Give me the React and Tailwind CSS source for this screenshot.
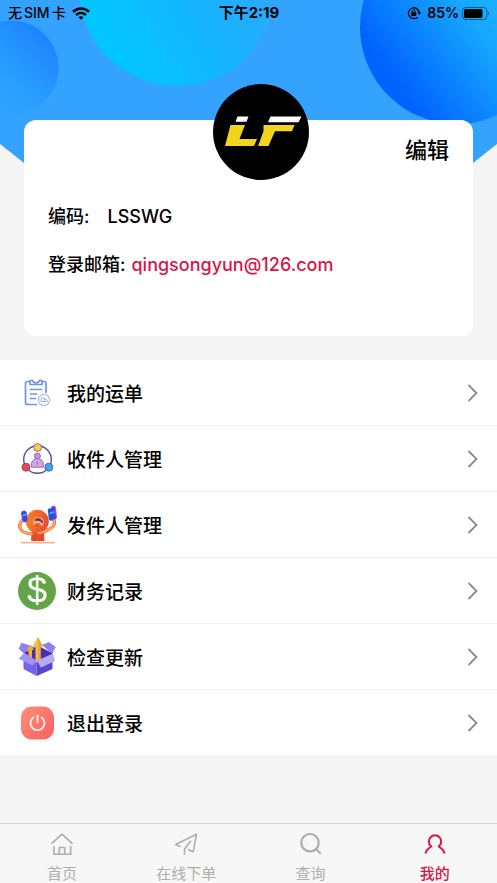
import React from "react";

const WaybillIcon = () => (
  <svg viewBox="0 0 38 38" className="size-full" fill="none" stroke="#6f93ea" strokeWidth="1.700" strokeLinecap="round" strokeLinejoin="round">
    <path d="M11.500 7.500H9.500A2 2 0 0 0 7.500 9.500V28.500A2 2 0 0 0 9.500 30.500H18.500M24.500 7.500H26A2 2 0 0 1 28 9.500V18.500" />
    <path d="M12 6.500h2.500c1 3 6 3 7 0H24v4H12z" />
    <path d="M12.500 15.500h11M12.500 20h6M12.500 24.500h5" />
    <circle cx="26" cy="26" r="5.600" stroke="#a9bff5" strokeWidth="1.300" />
    <path d="M23 27.500v-3.500h3.500v3.500M26.500 25.200h1.800l1 1.200v1.200h-5.800" stroke="#8fabf0" strokeWidth="0.900" />
  </svg>
);

const ReceiverIcon = () => (
  <svg viewBox="0 0 38 38" className="size-full">
    <circle cx="19.500" cy="19.500" r="13.800" fill="none" stroke="#59508f" strokeWidth="1.400" />
    <path d="M13.500 27.200v-3.200a5.900 5.500 0 0 1 11.800 0v3.200z" fill="#d6a2ec" stroke="#8e63b8" strokeWidth="0.900" />
    <circle cx="19.400" cy="16" r="3" fill="#c993e0" stroke="#8e63b8" strokeWidth="0.900" />
    <path d="M19.400 21.500v3" stroke="#8e63b8" strokeWidth="1" />
    <circle cx="19.600" cy="7.500" r="3.900" fill="#f8c85c" stroke="#8a6a70" strokeWidth="0.900" />
    <circle cx="8" cy="27.200" r="4" fill="#ee4657" stroke="#8f416b" strokeWidth="0.900" />
    <circle cx="30.800" cy="27.200" r="4" fill="#3fa5ee" stroke="#4b5c9c" strokeWidth="0.900" />
  </svg>
);

const SenderIcon = () => (
  <svg viewBox="0 0 38 38" className="size-full overflow-visible" strokeLinecap="round" strokeLinejoin="round">
    <defs>
      <linearGradient id="senderHead" x1="0" y1="0" x2="1" y2="0.300">
        <stop offset="0" stopColor="#fb8a1e" />
        <stop offset="1" stopColor="#e94b35" />
      </linearGradient>
    </defs>
    <path d="M3.500 36.700H36" stroke="#f7b98a" strokeWidth="1.800" />
    <path d="M14 24L13 33.500Q13 35 14.500 35H26.500L26 23z" fill="#ea4a2c" />
    <path d="M17 34.500v-3M23.500 34.500v-3" stroke="#c9302c" strokeWidth="0.800" />
    <path d="M4.500 14C-1 20 1.500 27.500 14 28" fill="none" stroke="#e8573a" strokeWidth="3.200" />
    <path d="M4.500 14C-1 20 1.500 27.500 14 28" fill="none" stroke="#fcae5a" strokeWidth="2" />
    <circle cx="19.300" cy="15.300" r="11.500" fill="url(#senderHead)" />
    <path d="M15.500 19c-2-6 2-9 6-7.500 4.500 0 5.500 5 3 9-2-2-3-3-4.500-3.500-1.500 0-2.500.5-4.500 2z" fill="#f7a981" />
    <path d="M16 15c1-3.500 6-4.500 9 .5l-.3 2.200c-2.500-3.200-4.700-3.200-8.700-2.700z" fill="#63404a" />
    <path d="M18.500 19.500l1 .8" stroke="#63404a" strokeWidth="0.900" />
    <path d="M36 14C38 21.500 32 22.500 26.500 25.500C24 27 22.500 27 20.500 27" fill="none" stroke="#e8573a" strokeWidth="3.200" />
    <path d="M36 14C38 21.500 32 22.500 26.500 25.500C24 27 22.500 27 20.500 27" fill="none" stroke="#fcae5a" strokeWidth="2" />
    <path d="M6 7.500l1 6" stroke="#d34fe0" strokeWidth="6" />
    <path d="M6 7.500l1 6" stroke="#2455d8" strokeWidth="4.800" />
    <path d="M35.500 2l1 9" stroke="#d34fe0" strokeWidth="5" />
    <path d="M32 4.500l1 8" stroke="#2455d8" strokeWidth="4.500" />
    <path d="M35.200 2.500l1 9" stroke="#2455d8" strokeWidth="3.600" />
    <path d="M5 9.500l3-1M31.500 7.500l4.500-1.500" stroke="#57a5ff" strokeWidth="1.400" />
  </svg>
);

const FinanceIcon = () => (
  <span className="flex size-full items-center justify-center rounded-full bg-[#62a447] font-['Liberation_Sans',sans-serif] text-[36px] leading-none text-white">
    $
  </span>
);

const UpdateIcon = () => (
  <svg viewBox="0 0 38 38" className="size-full overflow-visible">
    <path d="M3.500 4.700L17 9L6 15.700L0.700 10.700z" fill="#8f81ee" />
    <path d="M24 7L31 4L37.700 9L34 16z" fill="#8f81ee" />
    <path d="M6 15L20 7.500L35 15.700L18.700 24z" fill="#4a2fae" />
    <path d="M5.500 20L18.700 22V38L5.500 31z" fill="#7565e6" />
    <path d="M18.700 22L34.500 18V31L18.700 38z" fill="#5946d0" />
    <path d="M17.500 24V8.500H14.500L20 -1L25 8.500H22.500V24z" fill="#f8bd43" />
    <path d="M22.500 8.500H25L20 -1V24H22.500z" fill="#eba93c" />
    <path d="M10.500 18.500V12.500H8.500L12.500 6.500L16 12H14V20z" fill="#f3ad3d" />
    <path d="M6 15L18.700 22.500L14.500 27.500L0.700 20.700z" fill="#a094f5" />
    <path d="M18.700 22.500L35 15.700L37 23L23 29.500z" fill="#b5abf9" />
  </svg>
);

const LogoutIcon = () => (
  <svg viewBox="0 0 38 38" className="size-full">
    <defs>
      <linearGradient id="logoutBg" x1="0" y1="0" x2="1" y2="1">
        <stop offset="0" stopColor="#ff8f75" />
        <stop offset="1" stopColor="#f96062" />
      </linearGradient>
    </defs>
    <rect x="3" y="2.500" width="33" height="33" rx="11" fill="url(#logoutBg)" />
    <path d="M15.300 13.500A7 7 0 1 0 23.700 13.500M19.500 11.500V18.500" fill="none" stroke="#ffeeea" strokeWidth="1.800" strokeLinecap="round" />
  </svg>
);

const menuItems = [
  { label: "我的运单", Icon: WaybillIcon },
  { label: "收件人管理", Icon: ReceiverIcon },
  { label: "发件人管理", Icon: SenderIcon },
  { label: "财务记录", Icon: FinanceIcon },
  { label: "检查更新", Icon: UpdateIcon },
  { label: "退出登录", Icon: LogoutIcon },
];

const tabs = [
  {
    label: "首页",
    width: 1.6,
    d: "M1.500 11.700L12 2.200L22.500 11.700M4 14V22.300H20.700V14M9.300 22V15.500H14.700V22",
  },
  {
    label: "在线下单",
    width: 1.6,
    d: "M6.600 14.700L1.600 12.500L22.500 2.200L19.300 19.700L14 17.500M16.800 8.800L10.500 17V22.700",
  },
  {
    label: "查询",
    width: 2.2,
    d: "M19.700 10.700A8.700 8.700 0 1 1 2.300 10.700A8.700 8.700 0 1 1 19.700 10.700M17.200 17.200L21.700 21.800",
  },
  {
    label: "我的",
    width: 2,
    active: true,
    d: "M2.500 21.500C3 18.500 5 16.500 8.300 14.500A6.200 6.200 0 1 1 15.700 14.500C19 16.500 21 18.500 21.500 21.500",
  },
];

const StatusBar = () => (
  <div className="grid h-[26px] grid-cols-[1fr_auto_1fr] items-center pl-2 pr-[7px] text-sm">
    <div className="flex items-center gap-[6px] font-medium">
      <span className="flex gap-[2px]">
        <span>无</span>
        <span>SIM</span>
        <span>卡</span>
      </span>
      <svg viewBox="0 0 18 13" className="h-[13px] w-[18px]" fill="none" stroke="#000" strokeWidth="2.400">
        <path d="M1 4.800C5.500 .3 12.500 .3 17 4.800M4 8C7 5.200 11 5.200 14 8" />
        <path d="M6.500 10.200C8 8.900 10 8.900 11.500 10.200L9 12.800z" fill="#000" stroke="none" />
      </svg>
    </div>
    <span className="text-[15px] font-bold">下午2:19</span>
    <div className="flex items-center justify-end gap-[3px]">
      <svg viewBox="0 0 14 14" className="mr-[3px] size-[14px]" fill="none" stroke="#000" strokeWidth="1.400">
        <path d="M10.500 11.200A5.400 5.400 0 1 1 12.200 6.500" />
        <path d="M10.200 6.200h4L12.300 9z" fill="#000" stroke="none" />
        <rect x="4.200" y="6.300" width="5" height="3.800" rx="0.500" fill="#000" stroke="none" />
        <path d="M5.300 6.500V5.300a1.400 1.400 0 0 1 2.800 0V6.500" strokeWidth="1" />
      </svg>
      <span className="font-semibold">85%</span>
      <svg viewBox="0 0 28 13" className="h-[13px] w-[28px]">
        <rect x="0.500" y="0.500" width="24.500" height="12" rx="3.500" fill="none" stroke="#000" strokeOpacity="0.450" />
        <rect x="2" y="2" width="18.500" height="9" rx="1.800" />
        <path d="M26.300 4.500c1.300.5 1.300 3.500 0 4z" fillOpacity="0.450" />
      </svg>
    </div>
  </div>
);

// decorative header: blue arc with three gradient bubbles
const Banner = () => (
  <svg viewBox="0 0 497 220" className="absolute inset-x-0 top-0 w-full">
    <defs>
      <linearGradient id="bubbleLeft" x1="0.900" y1="0.150" x2="0.250" y2="0.850">
        <stop offset="0" stopColor="#1d82ff" />
        <stop offset="0.600" stopColor="#289fff" />
        <stop offset="1" stopColor="#30a3ff" />
      </linearGradient>
      <linearGradient id="bubbleMid" x1="0.150" y1="0.850" x2="0.900" y2="0.400">
        <stop offset="0" stopColor="#00c6ff" />
        <stop offset="0.550" stopColor="#14b6ff" />
        <stop offset="1" stopColor="#2ca8ff" />
      </linearGradient>
      <linearGradient id="bubbleRight" x1="0.150" y1="0.750" x2="0.750" y2="0.300">
        <stop offset="0" stopColor="#0062ff" />
        <stop offset="0.700" stopColor="#17a8ff" />
        <stop offset="1" stopColor="#1cb2ff" />
      </linearGradient>
    </defs>
    <path d="M0 0H497V144L473 163Q370 220 248 220Q127 220 24 163L0 144z" fill="#34a2ff" />
    <circle cx="11" cy="68" r="47.500" fill="url(#bubbleLeft)" />
    <circle cx="177" cy="-12" r="98" fill="url(#bubbleMid)" />
    <circle cx="457" cy="27" r="97" fill="url(#bubbleRight)" />
  </svg>
);

const ProfileCard = () => (
  <section className="relative mx-6 mt-[94px] rounded-xl bg-white px-6 pb-[59px] pt-[14px] text-lg font-medium leading-6">
    <div className="absolute -top-9 left-1/2 -ml-9 size-24 overflow-hidden rounded-full bg-black">
      <svg viewBox="0 0 96 96" className="size-full">
        <path d="M24.500 32.500H35.500L33.500 37.700H22.500zM57.500 32.500H88.500L85.500 38.300H55z" fill="#fff" />
        <path d="M17.500 41H32L26.500 55H44L41 62H12z" fill="#f0d51c" />
        <path d="M50.500 41H81.500L79 47.300H62L55.500 62H45L50.500 47.300z" fill="#f0d51c" />
      </svg>
    </div>
    <div className="flex justify-end">
      <button type="button" className="text-[22px] leading-8">
        编辑
      </button>
    </div>
    <dl className="mt-[39px] space-y-6">
      <div className="flex gap-[18px]">
        <dt>编码:</dt>
        <dd>LSSWG</dd>
      </div>
      <div className="flex gap-[6px]">
        <dt>登录邮箱:</dt>
        <dd className="text-[#d91446]">qingsongyun@126.com</dd>
      </div>
    </dl>
  </section>
);

const App = () => {
  return (
    <div className="relative flex min-h-screen flex-col bg-[#f4f4f4] font-[Inter,'Noto_Sans_CJK_SC',sans-serif] text-black">
      <Banner />
      <header className="relative">
        <StatusBar />
        <ProfileCard />
      </header>
      <ul className="mt-6 divide-y divide-[#f1f1f1] bg-white">
        {menuItems.map(({ label, Icon }) => (
          <li key={label}>
            <button type="button" className="flex h-[65px] w-full items-center gap-[11px] pl-[18px] pr-[18px] text-left">
              <span className="size-[38px]">
                <Icon />
              </span>
              <span className="flex-1 font-['Noto_Sans_CJK_SC',sans-serif] text-[19px] font-medium leading-7">{label}</span>
              <svg viewBox="0 0 12 18" className="h-[18px] w-[12px]" fill="none" stroke="#8a8a8a" strokeWidth="1.800">
                <path d="M1.500 1L9.500 9L1.500 17" />
              </svg>
            </button>
          </li>
        ))}
      </ul>
      <nav className="mt-auto grid h-[60px] grid-cols-4 border-t border-[#d6d6d6] bg-[#f7f7f7]">
        {tabs.map((tab) => (
          <a
            key={tab.label}
            href="#"
            className={`flex flex-col items-center gap-[8px] pt-[8px] text-[15px] leading-5 ${
              tab.active ? "font-medium text-[#d91446]" : "text-[#adadad]"
            }`}
          >
            <svg viewBox="0 0 24 24" className="size-6" fill="none" stroke="currentColor" strokeWidth={tab.width} strokeLinejoin="round">
              <path d={tab.d} />
            </svg>
            {tab.label}
          </a>
        ))}
      </nav>
    </div>
  );
};

export default App;
